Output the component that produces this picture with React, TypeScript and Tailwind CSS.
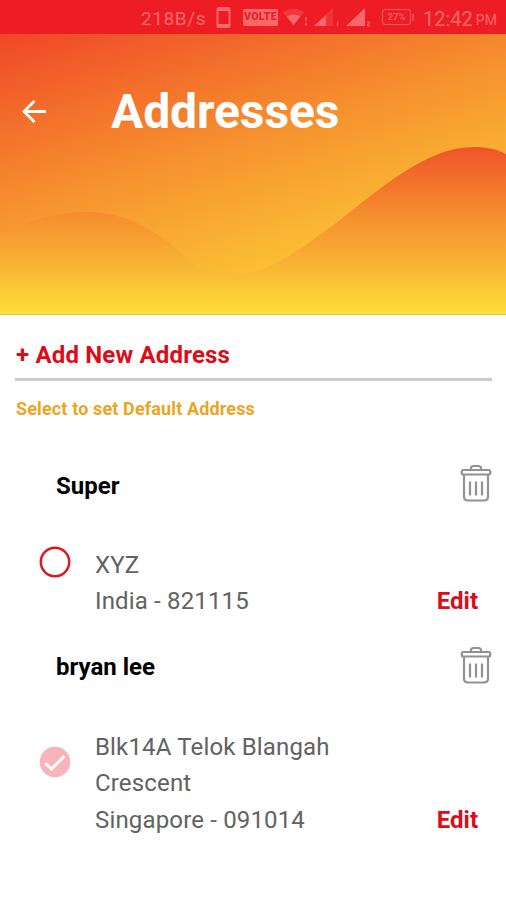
interface Address {
  id: number;
  name: string;
  lines: string[];
  selected: boolean;
}

const addresses: Address[] = [
  { id: 1, name: 'Super', lines: ['XYZ', 'India - 821115'], selected: false },
  {
    id: 2,
    name: 'bryan lee',
    lines: ['Blk14A Telok Blangah', 'Crescent', 'Singapore - 091014'],
    selected: true,
  },
];

function StatusBar() {
  return (
    <div className="flex h-[34px] items-center bg-[#ee1c25] pl-[141px] text-[#f5696a]">
      <span className="w-[75px] pt-[3px] text-[19px] leading-none tracking-[0.6px]">218B/s</span>
      <svg className="mt-[2px] h-[22px] w-[15px]" viewBox="0 0 15 22">
        <rect x="1.500" y="1" width="12" height="19" rx="1.5" fill="none" stroke="currentColor" strokeWidth="2" />
        <path d="M1.500 2.500h12M1.500 18.500h12" stroke="currentColor" strokeWidth="3" />
      </svg>
      <span className="ml-[12px] flex h-[17px] w-[35px] items-center justify-center rounded-[2px] bg-current">
        <span className="pt-px text-[10.5px] font-black leading-none tracking-[0.3px] text-[#e0252c]">VOLTE</span>
      </span>
      <svg className="ml-[4px] mt-[2px] h-[22px] w-[27px]" viewBox="0 0 27 22">
        <path d="M1 5.500Q11.500 -2 22 5.500L11.500 18Z" fill="currentColor" opacity="0.35" />
        <path d="M4.500 9.500Q11.500 5.500 18.500 9.500L11.500 18Z" fill="currentColor" />
        <path d="M24 10v3.500M24 15.500v3" stroke="currentColor" strokeWidth="1.500" />
      </svg>
      <svg className="ml-[4px] mt-[1px] h-[22px] w-[28px]" viewBox="0 0 28 22">
        <path d="M1 19L20 1V19Z" fill="currentColor" opacity="0.3" />
        <path d="M1 19L13 8V19Z" fill="currentColor" />
        <path d="M24.500 14.500v4.500" stroke="currentColor" strokeWidth="1.500" opacity="0.7" />
      </svg>
      <svg className="ml-[4px] mt-[1px] h-[22px] w-[28px]" viewBox="0 0 28 22">
        <path d="M1 19L20 1V19Z" fill="currentColor" />
        <path d="M22 15h2.500v2h-2v2h2.500" fill="none" stroke="currentColor" strokeWidth="1" />
      </svg>
      <span className="ml-[9px] flex h-[16px] w-[29px] items-center justify-center rounded-[3px] border-[1.5px] border-current opacity-85">
        <span className="text-[9.5px] font-bold leading-none">27%</span>
      </span>
      <span className="ml-[1px] h-[7px] w-[2px] bg-current opacity-60" />
      <span className="ml-[9px] pt-[3px] text-[20px] leading-none">12:42</span>
      <span className="ml-[3px] pt-[6px] text-[14px] leading-none">PM</span>
    </div>
  );
}

function Header() {
  return (
    <header className="relative h-[281px] border-b border-[#dfc84a]">
      <svg className="absolute inset-0 h-[280px] w-full" viewBox="0 34 506 280" preserveAspectRatio="none">
        <defs>
          <linearGradient id="sky" gradientUnits="userSpaceOnUse" x1="0" y1="34" x2="95" y2="351">
            <stop offset="0" stopColor="#f04727" />
            <stop offset="0.25" stopColor="#f36b2b" />
            <stop offset="0.5" stopColor="#f68f2e" />
            <stop offset="0.78" stopColor="#f9b032" />
            <stop offset="1" stopColor="#fcc935" />
          </linearGradient>
          <linearGradient id="wave" gradientUnits="userSpaceOnUse" x1="0" y1="147" x2="0" y2="314">
            <stop offset="0" stopColor="#f0532a" />
            <stop offset="0.4" stopColor="#f58d2e" />
            <stop offset="0.75" stopColor="#f9b934" />
            <stop offset="1" stopColor="#fde037" />
          </linearGradient>
        </defs>
        <rect y="34" width="506" height="280" fill="url(#sky)" />
        <path
          d="M0 234C30 220 58 212 88 212C120 212 151 227 174 247C193 264 207 276 231 276C267 276 306 245 340 220C380 189 426 147 474 147C486 147 497 149 506 154V314H0Z"
          fill="url(#wave)"
        />
      </svg>
      <div className="relative flex items-center pt-[49px]">
        <svg className="ml-[21px] h-[26px] w-[26px]" viewBox="0 0 26 26" fill="none" stroke="#fff" strokeWidth="2.8">
          <path d="M25 12.500H3M13.500 2L3 12.500L13.500 23" />
        </svg>
        <h1 className="ml-[64px] text-[48px] font-bold leading-[58px] tracking-[-0.1px] text-white">Addresses</h1>
      </div>
    </header>
  );
}

function TrashIcon() {
  return (
    <svg className="h-[38px] w-[32px]" viewBox="0 0 32 38" fill="none" stroke="#929292" strokeWidth="2.200">
      <path d="M11 6V4.500Q11 2 13.500 2H18.500Q21 2 21 4.500V6" />
      <rect x="1.800" y="6" width="28.400" height="4.500" rx="1.500" />
      <path d="M4 10.500V32.500Q4 36.500 8 36.500H24Q28 36.500 28 32.500V10.500" />
      <path d="M10 17.500V31.500M16 17.500V31.500M22 17.500V31.500" />
    </svg>
  );
}

function Radio({ selected }: { selected: boolean }) {
  if (selected) {
    return (
      <svg className="h-[32px] w-[32px]" viewBox="0 0 32 32">
        <circle cx="16" cy="16" r="15.300" fill="#f8b4b9" />
        <path d="M6 17L12.500 23L25.500 10" fill="none" stroke="#fff" strokeWidth="3" />
      </svg>
    );
  }
  return (
    <svg className="h-[32px] w-[32px]" viewBox="0 0 32 32">
      <circle cx="16" cy="16" r="14.200" fill="none" stroke="#dc1820" strokeWidth="2.500" />
    </svg>
  );
}

function AddressItem({ address }: { address: Address }) {
  return (
    <section>
      <div className="flex h-[38px] items-center justify-between pl-[56px] pr-[14px]">
        <h2 className="pt-[5px] text-[24px] font-bold leading-7 text-black">{address.name}</h2>
        <TrashIcon />
      </div>
      <div className="mt-[44px] flex pl-[39px] pr-[28px]">
        <div className={address.selected ? 'pt-[18px]' : ''}>
          <Radio selected={address.selected} />
        </div>
        <div className="ml-[24px] flex-1 pt-px text-[24px] leading-[36.4px] tracking-[0.16px] text-[#626262]">
          {address.lines.map((line) => (
            <p key={line}>{line}</p>
          ))}
        </div>
        <button className="self-end text-[24px] font-bold leading-[36.4px] text-[#db0d19]">Edit</button>
      </div>
    </section>
  );
}

export default function App() {
  return (
    <div className="h-[900px] w-[506px] overflow-hidden bg-white font-['Roboto',sans-serif]">
      <StatusBar />
      <Header />
      <main>
        <div className="ml-[15px] mr-[14px] border-b-[3px] border-[#cbcbcb] pt-[25px] pb-[8px]">
          <button className="block pl-px text-[24px] font-bold leading-[30px] tracking-[0.18px] text-[#db0d19]">
            + Add New Address
          </button>
        </div>
        <p className="pl-[16px] pt-[16px] text-[18px] font-bold leading-6 tracking-[0.13px] text-[#eba51f]">
          Select to set Default Address
        </p>
        <div className="flex flex-col gap-[26px] pt-[43px]">
          {addresses.map((address) => (
            <AddressItem key={address.id} address={address} />
          ))}
        </div>
      </main>
    </div>
  );
}
